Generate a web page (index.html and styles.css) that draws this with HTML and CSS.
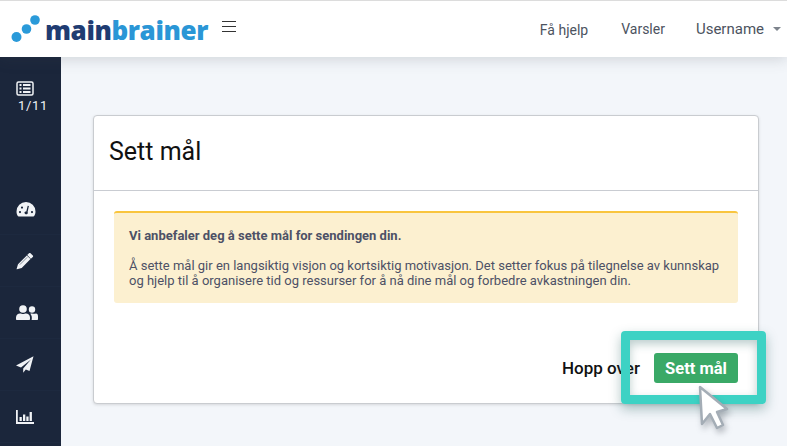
FILE: index.html
```html
<!DOCTYPE html>
<html lang="no">
<head>
  <meta charset="UTF-8" />
  <title>Sett mål</title>
  <link rel="stylesheet" href="styles.css">
</head>
<body>
  <header class="topbar">
    <div class="brand">
      <svg class="brand-dots" width="30" height="30" viewBox="0 0 30 30">
        <circle cx="5.500" cy="23" r="5" fill="#2a9ad9"/>
        <circle cx="15.500" cy="15" r="4.800" fill="#2a9ad9"/>
        <circle cx="24" cy="6" r="4.800" fill="#2a9ad9"/>
      </svg>
      <span class="brand-name"><span class="brand-dark">main</span><span class="brand-light">brainer</span></span>
    </div>
    <svg class="burger" width="14" height="12" viewBox="0 0 14 12" shape-rendering="crispEdges">
      <path d="M0 .5h14M0 5.500h14M0 10.500h14" stroke="#333" stroke-width="1"/>
    </svg>
    <nav class="topnav">
      <a class="help">Få hjelp</a>
      <a>Varsler</a>
      <a class="user">Username<span class="caret"></span></a>
    </nav>
  </header>

  <div class="layout">
    <aside class="sidebar">
      <div class="steps">
        <svg width="18" height="15" viewBox="0 0 18 15">
          <rect x="1" y="1" width="16" height="13" rx="1.500" fill="none" stroke="#f1f3f6" stroke-width="1.500"/>
          <path d="M3.500 4h2M7 4h7.500M3.500 7.500h2M7 7.500h7.500M3.500 11h2M7 11h7.500" stroke="#f1f3f6" stroke-width="2"/>
        </svg>
        <span>1/11</span>
      </div>
      <ul class="side-icons">
        <li>
          <svg width="20" height="16" viewBox="0 0 20 16">
            <path fill="#f1f3f6" fill-rule="evenodd" d="M10 1a9.500 9.500 0 0 0-9.500 9.500c0 1.800.5 3.300 1.300 4.600.2.300.5.400.8.400h14.800c.3 0 .6-.1.8-.4.800-1.300 1.300-2.800 1.300-4.600A9.500 9.500 0 0 0 10 1zM8.500 11.500a1.700 1.700 0 0 0 3 1.200c.5-.6.400-1.300.1-1.800l1.300-5.800-1.200-.3-1.400 5.700c-1 0-1.800.3-1.800 1zM4 10a1.100 1.100 0 1 1 0 2.200A1.100 1.100 0 0 1 4 10zm2-4.500a1.100 1.100 0 1 1 0 2.200 1.100 1.100 0 0 1 0-2.200zM16 10a1.100 1.100 0 1 1 0 2.200 1.100 1.100 0 0 1 0-2.200z"/>
          </svg>
        </li>
        <li>
          <svg width="18" height="18" viewBox="0 0 18 18">
            <path fill="#f1f3f6" d="M13 1.200c.5-.4 1.100-.4 1.500 0l2.300 2.300c.4.400.4 1 0 1.500l-1.900 1.800-3.700-3.700zM10.800 3.400l3.700 3.700L5.700 15.900 1 17.300c-.3.100-.5-.1-.4-.4L2 12.200z"/>
            <path d="M3.800 12.700l7.400-7.400" stroke="#1b263b" stroke-width=".5"/>
          </svg>
        </li>
        <li>
          <svg width="22" height="15" viewBox="0 0 22 15">
            <circle cx="7" cy="4" r="3.800" fill="#f1f3f6"/>
            <circle cx="16" cy="4.500" r="3.200" fill="#f1f3f6"/>
            <path fill="#f1f3f6" d="M0 12.500C0 10 2 8.500 4 8.500c1 0 1.800.5 3 .5s2-.5 3-.5c2 0 4 1.500 4 4V14c0 .6-.4 1-1 1H1c-.6 0-1-.4-1-1z"/>
            <path fill="#f1f3f6" d="M15.500 15c.2-.3.300-.6.300-1v-1.500c0-1.500-.6-2.800-1.600-3.700.6-.2 1-.3 1.800-.3.800 0 1.200.3 2 .3s1.200-.3 2-.3c1.300 0 2 1.200 2 3V14c0 .6-.4 1-1 1z"/>
          </svg>
        </li>
        <li>
          <svg width="18" height="17" viewBox="0 0 18 17">
            <path fill="#f1f3f6" d="M17.500.2 0 9.500l5 2L15 3.500 7.200 12.500v4.200l2.600-3.200 3.700 1.500z"/>
          </svg>
        </li>
        <li>
          <svg width="18" height="14" viewBox="0 0 18 14">
            <path fill="#f1f3f6" d="M0 0h1.800v12H18v2H0zM3.500 7h2.300v4H3.500zM7 4.500h2.300V11H7zM10.300 6.500h2.300V11h-2.300zM13.600 2h2.300v9h-2.300z"/>
          </svg>
        </li>
      </ul>
    </aside>

    <main class="content">
      <section class="card">
        <h1 class="card-title">Sett mål</h1>
        <div class="card-body">
          <div class="notice">
            <p class="notice-lead">Vi anbefaler deg å sette mål for sendingen din.</p>
            <p>Å sette mål gir en langsiktig visjon og kortsiktig motivasjon. Det setter fokus på tilegnelse av kunnskap og hjelp til å organisere tid og ressurser for å nå dine mål og forbedre avkastningen din.</p>
          </div>
          <div class="actions">
            <a class="skip">Hopp over</a>
            <button class="goal">Sett mål</button>
          </div>
        </div>
      </section>
    </main>
  </div>

  <div class="highlight"></div>
  <svg class="pointer" width="34" height="48" viewBox="0 0 34 48">
    <path d="M3 3 L5 40 L13 30 L20 44 L26 41 L20 28 L30 25 Z" fill="#fff" stroke="#a4adb6" stroke-width="2.500" stroke-linejoin="round"/>
  </svg>
</body>
</html>
```

FILE: styles.css
```css
* {
  margin: 0;
  padding: 0;
  box-sizing: border-box;
}

html,
body {
  height: 100%;
  overflow: hidden;
}

body {
  position: relative;
  font-family: Roboto, sans-serif;
  background: #f3f6fa;
  color: #4a4f5a;
}

.topbar {
  height: 57px;
  display: flex;
  align-items: center;
  background: #fff;
  border-top: 1px solid #dcdcdc;
  padding-left: 11px;
  position: relative;
  z-index: 1;
  box-shadow: 0 2px 14px rgba(60, 70, 80, 0.2);
}

.brand {
  display: flex;
  align-items: center;
  height: 100%;
}

.brand-dots {
  margin-top: -1px;
}

.brand-name {
  font-family: "Open Sans", sans-serif;
  font-weight: 800;
  font-size: 26px;
  letter-spacing: -0.4px;
  margin-left: 4px;
  margin-top: 1px;
}

.brand-dark {
  color: #1f3c72;
}

.brand-light {
  color: #2a96d6;
}

.burger {
  margin-left: 14px;
  margin-top: -4px;
}

.topnav {
  margin-left: auto;
  display: flex;
  align-items: center;
  font-size: 14px;
  color: #4c5360;
  padding-right: 6px;
}

.topnav a {
  margin-left: 33px;
}

.topnav .help {
  margin-top: 1px;
}

.topnav .user {
  display: flex;
  align-items: center;
  font-size: 15px;
  margin-left: 31px;
  margin-top: -1px;
}

.caret {
  width: 0;
  height: 0;
  margin-left: 9px;
  margin-top: 1px;
  border-left: 4px solid transparent;
  border-right: 4px solid transparent;
  border-top: 4px solid #7d838c;
}

.layout {
  display: flex;
  height: calc(100% - 57px);
}

.sidebar {
  width: 61px;
  flex-shrink: 0;
  background: #1b263b;
  color: #f1f3f6;
}

.steps {
  display: flex;
  flex-direction: column;
  padding: 24px 0 0 16px;
  font-size: 13px;
  letter-spacing: 0.7px;
  height: 126px;
}

.steps span {
  margin: 2px 0 0 2px;
}

.side-icons {
  list-style: none;
}

.side-icons li {
  height: 52px;
  display: flex;
  align-items: center;
  padding-left: 16px;
  border-bottom: 1px solid #1d293f;
}

.content {
  flex: 1;
  padding: 58px 28px 0 32px;
}

.card {
  height: 289px;
  background: #fff;
  border: 1px solid #c9ccd0;
  border-radius: 4px;
  box-shadow: 0 1px 3px rgba(0, 0, 0, 0.12);
}

.card-title {
  height: 75px;
  padding: 21px 15px 0;
  font-size: 25px;
  font-weight: 400;
  line-height: 30px;
  color: #111;
  border-bottom: 1px solid #c9ccd2;
}

.card-body {
  padding: 20px 20px 0;
}

.notice {
  height: 92px;
  padding: 15px 15px 0;
  background: #fcf0d0;
  border-top: 2px solid #f9c53e;
  border-radius: 3px;
  font-size: 13px;
  line-height: 15px;
  color: #4d5166;
}

.notice-lead {
  font-weight: 700;
  margin-bottom: 15px;
}

.actions {
  display: flex;
  justify-content: flex-end;
  align-items: center;
  margin-top: 50px;
}

.skip {
  font-size: 17px;
  font-weight: 500;
  color: #111;
  margin-right: 14px;
}

.goal {
  width: 84px;
  height: 30px;
  border: none;
  border-radius: 3px;
  background: #3aa967;
  color: #fff;
  font-family: Roboto, sans-serif;
  font-size: 16.500px;
  font-weight: 700;
}

/* callout drawn over the screenshot */
.highlight {
  position: absolute;
  left: 621px;
  top: 331px;
  width: 145px;
  height: 73px;
  border: 9px solid #3dd2c4;
  border-radius: 4px;
  box-shadow: 0 5px 12px rgba(30, 90, 85, 0.35), inset 0 4px 10px rgba(30, 90, 85, 0.3);
}

.pointer {
  position: absolute;
  left: 697px;
  top: 384px;
  filter: drop-shadow(2px 4px 3px rgba(60, 70, 80, 0.35));
}
```
